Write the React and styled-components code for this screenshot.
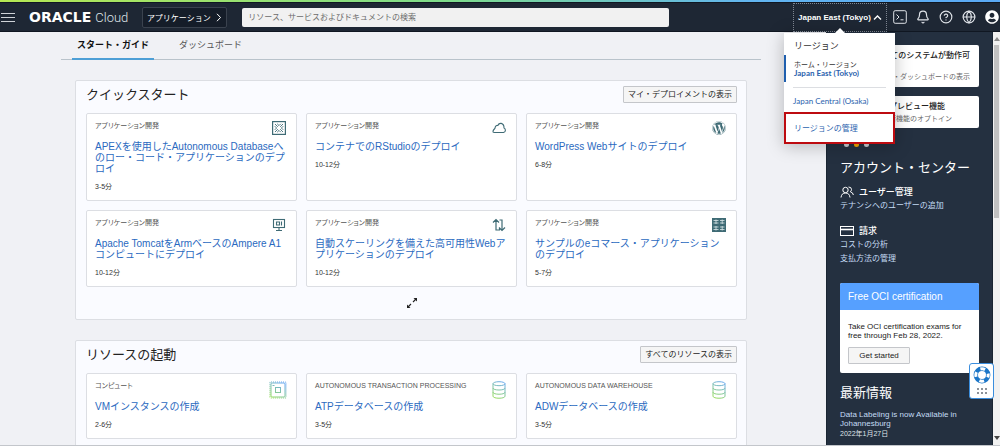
import React from "react";
import styled, { createGlobalStyle, css } from "styled-components";
import { Bell, CircleHelp, Globe } from "lucide-react";
import { FaWordpress, FaUserCircle } from "react-icons/fa";

const GlobalStyle = createGlobalStyle`
  * { box-sizing: border-box; }
  body {
    margin: 0;
    background: #f0f1f5;
    color: #222;
    font-family: "Liberation Sans", "Noto Sans CJK JP", sans-serif;
    font-size: 8px;
  }
  h1, h2, h3, p { margin: 0; padding: 0; font-weight: 400; }
  button, input { font: inherit; color: inherit; }
  a { text-decoration: none; color: inherit; }
`;

const Shell = styled.div`
  height: 100vh;
  display: flex;
  flex-direction: column;
  overflow: hidden;
  border-bottom: 1px solid #c3c6cb;
`;

/* ---------- top bar ---------- */

const Accent = styled.div`
  flex: none;
  height: 2px;
  background: linear-gradient(90deg, #b5e853, #7edc8c 45%, #62b5f0 75%, #5aa9f5);
`;

const TopBar = styled.header`
  flex: none;
  height: 30px;
  display: flex;
  align-items: center;
  background: #1e2734;
  border-top: 1px solid #101722;
  border-bottom: 1px solid #101722;
  color: #fff;
`;

const IconButton = styled.button`
  flex: none;
  display: flex;
  padding: 0;
  border: 0;
  background: none;
  color: #dfe3e8;
`;

const Brand = styled.a`
  display: flex;
  align-items: baseline;
  gap: 4px;
  margin: 0 14px 0 14px;
  line-height: 16px;
  white-space: nowrap;
`;

const BrandName = styled.span`
  font: 700 14px/16px "DejaVu Sans", sans-serif;
`;

const BrandProduct = styled.span`
  font: 300 13px/16px Roboto, sans-serif;
  color: #dfe3e8;
`;

const AppsButton = styled.button`
  flex: none;
  display: flex;
  align-items: center;
  justify-content: center;
  gap: 3px;
  width: 85px;
  height: 21px;
  padding: 0;
  background: #151d29;
  border: 1px solid #3a424e;
  border-radius: 2px;
  color: #fff;
`;

const Search = styled.input`
  flex: 0 1 427px;
  min-width: 80px;
  height: 19px;
  margin: 0 15px;
  padding: 0 6px;
  border: 0;
  border-radius: 2px;
  background: #f1f1f1;
  &::placeholder { color: #6b6b6b; opacity: 1; }
`;

const TopActions = styled.div`
  margin-left: auto;
  display: flex;
  align-items: center;
  gap: 6px;
  padding-right: 1px;
`;

const IconGroup = styled.div`
  display: flex;
  align-items: center;
  gap: 9px;
`;

const RegionPicker = styled.div`
  position: relative;
`;

const RegionButton = styled.button`
  display: flex;
  align-items: center;
  justify-content: center;
  gap: 2px;
  width: 94px;
  height: 29px;
  padding: 0;
  border: 1px dotted #7e8692;
  background: #1e2734;
  color: #fff;
  font-weight: 700;
  white-space: nowrap;
`;

const RegionMenu = styled.div`
  position: absolute;
  z-index: 5;
  top: 30px;
  right: -8px;
  width: 111px;
  padding-top: 7px;
  background: #fff;
  color: #333;
  box-shadow: 0 2px 16px rgba(0, 0, 0, 0.25);
  &::before {
    content: "";
    position: absolute;
    left: 51px;
    top: -5px;
    border: 5px solid transparent;
    border-top: 0;
    border-bottom-color: #fff;
  }
`;

const RegionTitle = styled.h2`
  padding: 0 10px;
  font-size: 9px;
  line-height: 13px;
`;

const HomeRegion = styled.div`
  margin: 2px 9px 5px 0;
  padding: 5px 0 4px 8px;
  border-left: 2px solid #1f5fae;
  font-size: 7px;
  line-height: 9px;
`;

const menuLink = css`
  display: block;
  font-family: Lato, "Noto Sans CJK JP", sans-serif;
  color: #2b63ae;
`;

const HomeLink = styled.a`
  ${menuLink}
  font-size: 8px;
  line-height: 9px;
  font-weight: 700;
`;

const RegionLink = styled.a`
  ${menuLink}
  margin: 0 9px;
  padding: 7px 0 5px;
  border-top: 1px solid #dcdee2;
  line-height: 12px;
`;

const ManageLink = styled.a`
  ${menuLink}
  padding: 0 8px;
  border: 2px solid #bd0b10;
  line-height: 28px;
`;

/* ---------- page body ---------- */

const Body = styled.div`
  flex: 1;
  min-height: 0;
  display: flex;
`;

const Main = styled.main`
  flex: 1;
  min-width: 0;
  overflow: hidden;
  padding: 0 65px 0 61px;
`;

const Tabs = styled.nav`
  display: flex;
  gap: 20px;
  height: 28px;
  padding-left: 11px;
  border-bottom: 1px solid #b9c3cb;
`;

const Tab = styled.a`
  height: 28px;
  padding: 0 5px;
  font-size: 9px;
  line-height: 27px;
  color: ${(p) => (p.$active ? "#111" : "#555")};
  font-weight: ${(p) => (p.$active ? 700 : 400)};
  border-bottom: 2px solid ${(p) => (p.$active ? "#4d9fd6" : "transparent")};
`;

const Panel = styled.section`
  margin: 20px 14px 0;
  padding: 5px 9px 0 10px;
  background: #fafbff;
  border: 1px solid #dcdee3;
  border-radius: 2px;
`;

const PanelHead = styled.div`
  display: flex;
  align-items: center;
  justify-content: space-between;
  margin-bottom: 10px;
`;

const PanelTitle = styled.h2`
  font-size: 13px;
  line-height: 17px;
  color: #222;
`;

const OutlineButton = styled.button`
  height: 17px;
  padding: 0 4px;
  line-height: 14px;
  background: #f5f5f5;
  border: 1px solid #c4c6ca;
  border-radius: 1px;
  color: #222;
`;

const CardGrid = styled.div`
  display: grid;
  grid-template-columns: repeat(3, 1fr);
  gap: 9px;
`;

const CardBox = styled.article`
  min-width: 0;
  padding: 7px 9px 8px 8px;
  background: #fff;
  border: 1px solid #dcdee3;
  border-radius: 2px;
`;

const CardHead = styled.div`
  display: flex;
  justify-content: space-between;
  align-items: flex-start;
  height: 10px;
  padding-right: ${(p) => (p.$wide ? 0 : 1)}px;
`;

const CardLabel = styled.p`
  font-size: 7px;
  font-feature-settings: "palt";
  line-height: 10px;
  color: #555;
`;

const CardTitle = styled.h3`
  margin-top: 10px;
  font-size: 10px;
  line-height: 11px;
  color: #2a69c0;
  white-space: pre;
`;

const CardTime = styled.p`
  margin-top: 8px;
  font-size: 7px;
  line-height: 10px;
  color: #333;
`;

const ExpandButton = styled.button`
  display: flex;
  align-items: center;
  justify-content: center;
  width: 100%;
  height: 32px;
  padding: 0;
  border: 0;
  background: none;
`;

/* ---------- side column ---------- */

const Side = styled.aside`
  flex: none;
  width: 167px;
  padding: 13px 13px 0;
  background: #243040;
  border-left: 1px solid #1a2532;
  border-right: 1px solid #1a2532;
  color: #fff;
  overflow: hidden;
`;

const Notice = styled.section`
  height: ${(p) => (p.$tall ? 42 : 32)}px;
  margin-bottom: 9px;
  padding: 4px 9px 0 ${(p) => (p.$tall ? 0 : 49)}px;
  background: #fff;
  border-radius: 2px;
  text-align: ${(p) => (p.$tall ? "right" : "left")};
  color: #222;
  white-space: nowrap;
`;

const NoticeTitle = styled.h3`
  font-size: 8px;
  line-height: 13px;
  font-weight: 500;
`;

const NoticeText = styled.p`
  margin-top: ${(p) => (p.$tall ? 9 : 0)}px;
  font-size: 7px;
  line-height: 12px;
  color: #666;
`;

const Dots = styled.div`
  display: flex;
  gap: 5px;
  padding: 5px 0 0 4px;
`;

const Dot = styled.span`
  width: 5px;
  height: 5px;
  border-radius: 50%;
  background: ${(p) => (p.$active ? "#f5a800" : "#c9ced4")};
`;

const SideTitle = styled.h2`
  margin-top: ${(p) => p.$gap}px;
  font-size: 13px;
  line-height: 20px;
  white-space: nowrap;
`;

const SideGroup = styled.section`
  margin-top: ${(p) => p.$gap}px;
`;

const SideHeading = styled.h3`
  display: flex;
  align-items: center;
  gap: 5px;
  font-size: 9px;
  line-height: 14px;
  font-weight: 500;
`;

const SideLink = styled.a`
  display: block;
  margin-bottom: 1px;
  line-height: 13px;
  color: #c4dcf5;
`;

const Promo = styled.section`
  margin-top: 18px;
  background: #fff;
  border-radius: 2px;
  overflow: hidden;
  color: #222;
`;

const PromoTitle = styled.h3`
  padding: 0 8px;
  background: #56a0ff;
  color: #fff;
  font-size: 10px;
  line-height: 27px;
`;

const PromoBody = styled.div`
  padding: 12px 8px 9px;
  line-height: 9px;
`;

const PromoButton = styled(OutlineButton)`
  width: 62px;
  margin-top: 7px;
  padding: 0;
`;

const NewsLink = styled.a`
  display: block;
  margin-top: 7px;
  line-height: 9px;
  color: #c4dcf5;
`;

const NewsDate = styled.p`
  margin-top: 1px;
  font-size: 7px;
  line-height: 10px;
  color: #dfe3e8;
`;

const ScrollTrack = styled.div`
  flex: none;
  width: 7px;
  display: flex;
  flex-direction: column;
  align-items: center;
  justify-content: space-between;
  padding: 5px 0;
  background: #f1f1f1;
`;

const ScrollArrow = styled.span`
  border: 3px solid transparent;
  ${(p) => (p.$up ? "border-top: 0; border-bottom: 4px solid #8a8a8a;" : "border-bottom: 0; border-top: 4px solid #444;")}
`;

const ScrollThumb = styled.span`
  width: 5px;
  height: 43%;
  margin: 4px 0 auto;
  background: #c1c1c1;
`;

const HelpWidget = styled.button`
  position: fixed;
  right: 6px;
  bottom: 47px;
  width: 25px;
  height: 36px;
  display: flex;
  flex-direction: column;
  align-items: center;
  justify-content: space-between;
  padding: 2px 0 3px;
  background: #fff;
  border: 1px solid #3b8ede;
  border-radius: 3px;
`;

/* ---------- drawings ---------- */

const TEAL = "#3f6b75";

const ApexIcon = () => (
  <svg width="14" height="14" viewBox="0 0 14 14" fill="none" stroke={TEAL}>
    <rect x=".6" y=".6" width="12.8" height="12.8" strokeWidth="1.2" />
    <path d="M3 3L5.800 5.800M8.200 8.200L11 11M11 3L8.200 5.800M5.800 8.200L3 11M5.200 2.800L7 4.600 8.800 2.800M5.200 11.200L7 9.400 8.800 11.200M2.800 5.200L4.600 7 2.800 8.800M11.200 5.200L9.400 7l1.800 1.800" strokeWidth=".9" />
  </svg>
);

const CloudIcon = () => (
  <svg width="14" height="14" viewBox="0 0 14 14" fill="none" stroke={TEAL} strokeWidth="1.1" strokeLinejoin="round">
    <path d="M2.500 11.500H11.500Q13.400 11 13.400 9.200Q13.300 7.500 12 7Q12.200 3.300 9.200 2.400Q6.700 2.100 6 4.400Q3.500 4 3 7.200Q.8 9 1 11Q1.300 11.500 2.500 11.500Z" />
  </svg>
);

const MonitorIcon = () => (
  <svg width="14" height="14" viewBox="0 0 14 14" fill="none" stroke={TEAL} strokeWidth="1.1">
    <rect x="1.500" y="1.500" width="11" height="8" />
    <path d="M4.500 4h3v3h-3zM9.500 3.500v4M7 9.500v3M4 12.500h6" />
  </svg>
);

const UpDownIcon = () => (
  <svg width="14" height="14" viewBox="0 0 14 14" fill="none" stroke={TEAL} strokeWidth="1.200">
    <path d="M1 4.500L4 1.500l3 3M4 1.500V12h3.500V9.500M13 9.500l-3 3-3-3M10 12.500V2H7.500" />
  </svg>
);

const ShopIcon = () => (
  <svg width="14" height="14" viewBox="0 0 14 14">
    <rect width="14" height="14" fill={TEAL} />
    <path d="M1.500 2.500h5M8 2.500h4.500M1.500 5h5M8 5h4.500M1.500 9h5M8 9h4.500M1.500 11.500h5M8 11.500h4.500M4 1.500v4.500M10.200 1.500v4.500M4 8v4.500M10.200 8v4.500" stroke="#dbe7ea" strokeWidth=".8" />
  </svg>
);

const Gradient = ({ id }) => (
  <defs>
    <linearGradient id={id} gradientUnits="userSpaceOnUse" x1="0" y1="18" x2="10" y2="0">
      <stop offset="0" stopColor="#9be24a" />
      <stop offset="1" stopColor="#6aa9f0" />
    </linearGradient>
  </defs>
);

const ChipIcon = () => (
  <svg width="18" height="18" viewBox="0 0 18 18" fill="none" stroke="url(#chip)">
    <Gradient id="chip" />
    <rect x="2" y="2" width="14" height="14" rx="1" />
    <rect x="6.500" y="6.500" width="5" height="5" />
    <path d="M3.500 4.500h2" />
    <rect x="1" y="1" width="16" height="16" rx="1" strokeDasharray="1 1" strokeWidth="1.200" />
  </svg>
);

const DatabaseIcon = ({ id }) => (
  <svg width="14" height="18" viewBox="0 0 14 18" fill="none" stroke={`url(#${id})`}>
    <Gradient id={id} />
    <ellipse cx="7" cy="2.700" rx="6" ry="2" />
    <path d="M1 2.700v12.500c0 2.700 12 2.700 12 0V2.700M1 7c0 2.700 12 2.700 12 0M1 11.200c0 2.700 12 2.700 12 0" />
  </svg>
);

const ExpandIcon = () => (
  <svg width="12" height="12" viewBox="0 0 12 12" fill="#222" stroke="#222">
    <path d="M7 5l3-3M5 7l-3 3" strokeWidth="1.100" />
    <path d="M7.500 1H11v3.500zM1 7.500V11h3.500z" stroke="none" />
  </svg>
);

const MenuIcon = () => (
  <svg width="15" height="11" viewBox="0 0 15 11" stroke="#cfd3d8" strokeWidth="1">
    <path d="M1 1.500h14M1 5.500h14M1 9.500h14" />
  </svg>
);

const TerminalIcon = () => (
  <svg width="14" height="14" viewBox="0 0 14 14" fill="none" stroke="currentColor">
    <rect x=".7" y=".7" width="12.600" height="12.600" rx="1.500" />
    <path d="M3.500 4.500L6 7 3.500 9.500M7.500 9.800h3" />
  </svg>
);

const Chevron = ({ up }) => (
  <svg width="9" height="9" viewBox="0 0 9 9" fill="none" stroke="#fff" strokeWidth={up ? 1.4 : 1}>
    <path d={up ? "M1 6.500L4.500 3 8 6.500" : "M3 .8L6.500 4.500 3 8.200"} />
  </svg>
);

const PeopleIcon = () => (
  <svg width="14" height="12" viewBox="0 0 14 12" fill="none" stroke="#fff" strokeWidth="1">
    <circle cx="5.500" cy="4" r="2.700" />
    <path d="M1 11.500Q1.500 7 5.500 7T10 11.500M8.500 1Q11.500 1 11.500 3.500Q11.400 5 10.300 5.700Q13 6.500 13.400 9" />
  </svg>
);

const BillIcon = () => (
  <svg width="14" height="10" viewBox="0 0 14 10" fill="none" stroke="#fff">
    <rect x=".5" y=".5" width="13" height="9" />
    <path d="M0 3.500h14" strokeWidth="1.600" />
  </svg>
);

const LifebuoyIcon = () => (
  <svg width="18" height="18" viewBox="0 0 18 18" fill="none">
    <circle cx="9" cy="9" r="6.200" stroke="#1b76c8" strokeWidth="4.400" />
    <circle cx="9" cy="9" r="6.200" stroke="#fff" strokeWidth="3" strokeDasharray="4.870 4.870" strokeDashoffset="2.430" />
  </svg>
);

const GripIcon = () => (
  <svg width="12" height="8" viewBox="0 0 12 8" fill="#8d9299">
    {[1, 5, 9].map((x) => (
      <g key={x}>
        <rect x={x} y="1" width="2" height="2" />
        <rect x={x} y="5" width="2" height="2" />
      </g>
    ))}
  </svg>
);

/* ---------- content ---------- */

const quickStarts = [
  { title: "APEXを使用したAutonomous Databaseへ\nのロー・コード・アプリケーションのデプ\nロイ", time: "3-5分", icon: <ApexIcon /> },
  { title: "コンテナでのRStudioのデプロイ", time: "10-12分", icon: <CloudIcon /> },
  { title: "WordPress Webサイトのデプロイ", time: "6-8分", icon: <FaWordpress size={14} color={TEAL} /> },
  { title: "Apache TomcatをArmベースのAmpere A1\nコンピュートにデプロイ", time: "10-12分", icon: <MonitorIcon /> },
  { title: "自動スケーリングを備えた高可用性Webア\nプリケーションのデプロイ", time: "10-12分", icon: <UpDownIcon /> },
  { title: "サンプルのeコマース・アプリケーション\nのデプロイ", time: "5-7分", icon: <ShopIcon /> },
].map((c) => ({ ...c, label: "アプリケーション開発" }));

const resources = [
  { label: "コンピュート", title: "VMインスタンスの作成", time: "2-6分", icon: <ChipIcon />, wide: true },
  { label: "AUTONOMOUS TRANSACTION PROCESSING", title: "ATPデータベースの作成", time: "3-5分", icon: <DatabaseIcon id="atp" /> },
  { label: "AUTONOMOUS DATA WAREHOUSE", title: "ADWデータベースの作成", time: "3-5分", icon: <DatabaseIcon id="adw" /> },
];

const Card = ({ label, title, time, icon, wide }) => (
  <CardBox>
    <CardHead $wide={wide}>
      <CardLabel>{label}</CardLabel>
      {icon}
    </CardHead>
    <CardTitle><a href="#card">{title}</a></CardTitle>
    <CardTime>{time}</CardTime>
  </CardBox>
);

export default function App() {
  return (
    <Shell>
      <GlobalStyle />
      <Accent />
      <TopBar>
        <IconButton aria-label="メニュー"><MenuIcon /></IconButton>
        <Brand href="#home">
          <BrandName>ORACLE</BrandName>
          <BrandProduct>Cloud</BrandProduct>
        </Brand>
        <AppsButton>アプリケーション<Chevron /></AppsButton>
        <Search aria-label="検索" placeholder="リソース、サービスおよびドキュメントの検索" />
        <TopActions>
          <RegionPicker>
            <RegionButton aria-expanded="true">Japan East (Tokyo)<Chevron up /></RegionButton>
            <RegionMenu>
              <RegionTitle>リージョン</RegionTitle>
              <HomeRegion>
                <p>ホーム・リージョン</p>
                <HomeLink href="#tokyo">Japan East (Tokyo)</HomeLink>
              </HomeRegion>
              <RegionLink href="#osaka">Japan Central (Osaka)</RegionLink>
              <ManageLink href="#manage">リージョンの管理</ManageLink>
            </RegionMenu>
          </RegionPicker>
          <IconGroup>
            <IconButton aria-label="Cloud Shell"><TerminalIcon /></IconButton>
            <IconButton aria-label="通知"><Bell size={14} /></IconButton>
            <IconButton aria-label="ヘルプ"><CircleHelp size={14} /></IconButton>
            <IconButton aria-label="言語"><Globe size={14} /></IconButton>
            <IconButton aria-label="プロファイル"><FaUserCircle size={14} color="#fff" /></IconButton>
          </IconGroup>
        </TopActions>
      </TopBar>
      <Body>
        <Main>
          <Tabs>
            <Tab href="#start" $active>スタート・ガイド</Tab>
            <Tab href="#dashboard">ダッシュボード</Tab>
          </Tabs>
          <Panel>
            <PanelHead>
              <PanelTitle>クイックスタート</PanelTitle>
              <OutlineButton>マイ・デプロイメントの表示</OutlineButton>
            </PanelHead>
            <CardGrid>
              {quickStarts.map((c) => <Card key={c.title} {...c} />)}
            </CardGrid>
            <ExpandButton aria-label="展開"><ExpandIcon /></ExpandButton>
          </Panel>
          <Panel>
            <PanelHead>
              <PanelTitle>リソースの起動</PanelTitle>
              <OutlineButton>すべてのリソースの表示</OutlineButton>
            </PanelHead>
            <CardGrid>
              {resources.map((c) => <Card key={c.title} {...c} />)}
            </CardGrid>
            <ExpandButton aria-label="展開"><ExpandIcon /></ExpandButton>
          </Panel>
        </Main>
        <Side>
          <Notice $tall>
            <NoticeTitle>すべてのシステムが動作可</NoticeTitle>
            <NoticeText $tall>ヘルス・ダッシュボードの表示</NoticeText>
          </Notice>
          <Notice>
            <NoticeTitle>プレビュー機能</NoticeTitle>
            <NoticeText>新機能のオプトイン</NoticeText>
          </Notice>
          <Dots><Dot /><Dot $active /><Dot /></Dots>
          <SideTitle $gap={11}>アカウント・センター</SideTitle>
          <SideGroup $gap={7}>
            <SideHeading><PeopleIcon />ユーザー管理</SideHeading>
            <SideLink href="#users">テナンシへのユーザーの追加</SideLink>
          </SideGroup>
          <SideGroup $gap={12}>
            <SideHeading><BillIcon />請求</SideHeading>
            <SideLink href="#cost">コストの分析</SideLink>
            <SideLink href="#payment">支払方法の管理</SideLink>
          </SideGroup>
          <Promo>
            <PromoTitle>Free OCI certification</PromoTitle>
            <PromoBody>
              <p>Take OCI certification exams for free through Feb 28, 2022.</p>
              <PromoButton>Get started</PromoButton>
            </PromoBody>
          </Promo>
          <SideTitle $gap={10}>最新情報</SideTitle>
          <NewsLink href="#news">Data Labeling is now Available in Johannesburg</NewsLink>
          <NewsDate>2022年1月27日</NewsDate>
        </Side>
        <ScrollTrack>
          <ScrollArrow $up />
          <ScrollThumb />
          <ScrollArrow />
        </ScrollTrack>
      </Body>
      <HelpWidget aria-label="サポート">
        <LifebuoyIcon />
        <GripIcon />
      </HelpWidget>
    </Shell>
  );
}
